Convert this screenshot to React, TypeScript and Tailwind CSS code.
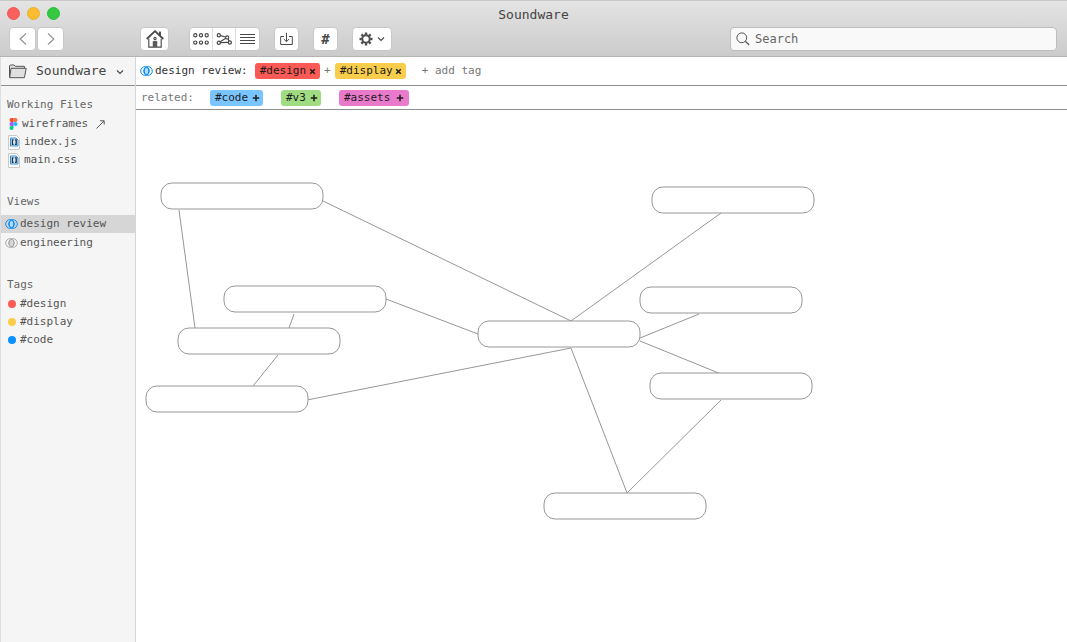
import type { ReactNode } from 'react';

type Point = [number, number];

const NODES: Point[] = [
  [25, 73],
  [88, 176],
  [42, 218],
  [10, 276],
  [516, 77],
  [504, 177],
  [342, 211],
  [514, 263],
  [408, 383],
];

const EDGES: [Point, Point][] = [
  [[187, 91], [435, 211]],
  [[43, 100], [59, 218]],
  [[250, 189], [342, 224]],
  [[158, 204], [153, 218]],
  [[142, 245], [117, 276]],
  [[171, 290], [435, 238]],
  [[585, 103], [435, 211]],
  [[563, 204], [504, 228]],
  [[504, 231], [585, 264]],
  [[585, 290], [491, 383]],
  [[435, 238], [491, 383]],
];

function HomeIcon() {
  return (
    <svg width="18" height="18" viewBox="0 0 16 16" fill="none" stroke="#4a4a4a" aria-hidden="true">
      <path d="M0.6 8 8 1l7.4 7" strokeWidth="1.6" />
      <path d="M2.5 7.8v7.4h11V7.8" strokeWidth="1" />
      <path d="M12.4 5V1.4" strokeWidth="1.8" />
      <path d="M6 15.2V10q2-1 4 0v5.2z" fill="#5a5a5a" stroke="none" />
      <circle cx="8" cy="7.5" r="1" strokeWidth="1" />
    </svg>
  );
}

function GridIcon() {
  return (
    <svg width="16" height="12" viewBox="0 0 16 12" fill="none" stroke="#4a4a4a" strokeWidth="1.2" aria-hidden="true">
      {[2.3, 9.6].map((y) => [2.3, 8, 13.7].map((x) => <circle key={`${x}-${y}`} cx={x} cy={y} r="1.6" />))}
    </svg>
  );
}

function GraphIcon() {
  return (
    <svg width="17" height="12" viewBox="0 0 17 12" fill="none" stroke="#4a4a4a" strokeWidth="1.2" aria-hidden="true">
      <circle cx="2.8" cy="2.3" r="1.6" />
      <circle cx="11.2" cy="4.4" r="1.6" />
      <circle cx="2.8" cy="9.8" r="1.6" />
      <circle cx="13.8" cy="9.5" r="1.6" />
      <path d="M4.4 2.7 9.6 4M4.1 8.8l5.7-3.5M4.4 9.6 12.2 9.3M12 5.8l1.1 2.2" />
    </svg>
  );
}

function ListIcon() {
  return (
    <svg width="15" height="12" viewBox="0 0 15 12" stroke="#4a4a4a" aria-hidden="true">
      <path d="M0 1.5h15M0 4.5h15M0 7.5h15M0 10.5h15" />
    </svg>
  );
}

function InboxIcon() {
  return (
    <svg width="13" height="14" viewBox="0 0 13 14" fill="none" stroke="#4a4a4a" aria-hidden="true">
      <path d="M4 4.5H0.7v8h11.6v-8H9M6.5 0.8v8.7M3.8 7l2.7 2.7L9.2 7" />
    </svg>
  );
}

function GearIcon() {
  return (
    <svg width="14" height="14" viewBox="0 0 14 14" fill="none" stroke="#4f4f4f" aria-hidden="true">
      <circle cx="7" cy="7" r="3.7" strokeWidth="2" />
      {[0, 45, 90, 135, 180, 225, 270, 315].map((angle) => (
        <path key={angle} d="M7 0.5v2.4" strokeWidth="2.4" transform={`rotate(${angle} 7 7)`} />
      ))}
    </svg>
  );
}

function ChevronDown() {
  return (
    <svg width="8" height="6" viewBox="0 0 8 6" fill="none" stroke="#4a4a4a" strokeWidth="1.2" aria-hidden="true">
      <path d="M1 1.5l3 3 3-3" />
    </svg>
  );
}

function FolderIcon() {
  return (
    <svg width="19" height="15" viewBox="0 0 19 15" fill="#e0e0e0" stroke="#555" strokeLinejoin="round" aria-hidden="true">
      <path d="M1.5 13.5V1.8l0.7-0.8h4l1.2 1.3h9v2.2" />
      <path d="M1.7 13.7 3 4.3h15.2L16.4 13.7z" />
    </svg>
  );
}

function RingsIcon({ stroke, fill }: { stroke: string; fill: string }) {
  return (
    <svg className="shrink-0" width="13" height="12" viewBox="0 0 13 12" fill="none" aria-hidden="true">
      <path d="M6.5 2.2a4.6 4.6 0 0 1 0 7.6a4.6 4.6 0 0 1 0-7.6" fill={fill} />
      <g stroke={stroke}>
        <circle cx="5" cy="6" r="4.3" />
        <circle cx="8" cy="6" r="4.3" />
        <ellipse cx="6.5" cy="6" rx="2.3" ry="3.8" />
      </g>
    </svg>
  );
}

function FigmaIcon() {
  return (
    <svg width="9" height="12" viewBox="0 0 8 12" aria-hidden="true">
      <path d="M4 0H2a2 2 0 0 0 0 4h2z" fill="#f24e1e" />
      <path d="M4 0h2a2 2 0 0 1 0 4H4z" fill="#ff6b55" />
      <path d="M4 4H2a2 2 0 0 0 0 4h2z" fill="#a259ff" />
      <circle cx="6" cy="6" r="2" fill="#1abcfe" />
      <path d="M4 8H2a2 2 0 1 0 2 2z" fill="#0acf83" />
    </svg>
  );
}

function CodeFileIcon() {
  return (
    <svg width="12" height="15" viewBox="0 0 12 15" fill="none" aria-hidden="true">
      <path d="M0.5 0.5h8l3 3v11h-11z" fill="#fff" stroke="#c9c9c9" />
      <path d="M2.5 3h5.5l2 2v6H2.5z" fill="#cfe6fa" stroke="#2f8fdc" />
      <path d="M5.6 4.8H4.4v4.6h1.2M6.9 4.8h1.3v4.6H6.9" stroke="#26323d" strokeWidth="1.3" />
    </svg>
  );
}

function CrossIcon() {
  return (
    <svg width="7" height="7" viewBox="0 0 7 7" stroke="#1c1c1c" strokeWidth="1.5" aria-hidden="true">
      <path d="M1.2 1.2l4.6 4.6M5.8 1.2 1.2 5.8" />
    </svg>
  );
}

function PlusIcon() {
  return (
    <svg width="8" height="8" viewBox="0 0 8 8" stroke="#1c1c1c" strokeWidth="1.5" aria-hidden="true">
      <path d="M4 0.8v6.4M0.8 4h6.4" />
    </svg>
  );
}

function ToolButton({ label, width, children }: { label: string; width: string; children: ReactNode }) {
  return (
    <button
      type="button"
      aria-label={label}
      className={`flex h-6 items-center justify-center rounded border border-[#c8c8c8] bg-white ${width}`}
    >
      {children}
    </button>
  );
}

function Header() {
  return (
    <header className="border-b border-b-[#b4b4b4] border-t border-t-[#c8c8c8] bg-linear-to-b from-[#e4e4e4] to-[#cbcbcb] pb-[5px]">
      <div className="grid h-[26px] grid-cols-[1fr_auto_1fr] items-end">
        <div className="flex gap-[7px] pb-[7px] pl-[7px]">
          <button type="button" aria-label="Close" className="size-[13px] rounded-full border border-[#ee5a52] bg-[#fc605c]" />
          <button type="button" aria-label="Minimize" className="size-[13px] rounded-full border border-[#e8b02c] bg-[#fdbc2f]" />
          <button type="button" aria-label="Zoom" className="size-[13px] rounded-full border border-[#30bb3c] bg-[#34c940]" />
        </div>
        <h1 className="pb-1 text-[13px] leading-4 text-[#444]">Soundware</h1>
      </div>
      <div className="flex items-center pl-[9px] pr-[10px]">
        <nav className="flex gap-px">
          <ToolButton label="Back" width="w-[27px]">
            <svg width="8" height="14" viewBox="0 0 8 14" fill="none" stroke="#999" strokeWidth="1.3" aria-hidden="true">
              <path d="M7 1.5 1.2 7 7 12.5" />
            </svg>
          </ToolButton>
          <ToolButton label="Forward" width="w-[27px]">
            <svg width="8" height="14" viewBox="0 0 8 14" fill="none" stroke="#999" strokeWidth="1.3" aria-hidden="true">
              <path d="M1 1.5 6.8 7 1 12.5" />
            </svg>
          </ToolButton>
        </nav>
        <div className="ml-19 flex shrink-0">
          <ToolButton label="Home" width="w-[29px]">
            <HomeIcon />
          </ToolButton>
        </div>
        <div className="ml-5 flex h-6 shrink-0 divide-x divide-[#ddd] overflow-hidden rounded border border-[#c8c8c8] bg-white">
          <button type="button" aria-label="Grid view" className="flex w-[23px] items-center justify-center"><GridIcon /></button>
          <button type="button" aria-label="Graph view" className="flex w-[23px] items-center justify-center"><GraphIcon /></button>
          <button type="button" aria-label="List view" className="flex w-[23px] items-center justify-center"><ListIcon /></button>
        </div>
        <div className="ml-[14px] flex shrink-0 gap-[14px]">
          <ToolButton label="Import" width="w-[25px]">
            <InboxIcon />
          </ToolButton>
          <ToolButton label="Tags" width="w-[25px]">
            <span className="text-sm font-bold leading-4 text-[#4a4a4a]">#</span>
          </ToolButton>
          <ToolButton label="Settings" width="w-10 gap-1">
            <GearIcon />
            <ChevronDown />
          </ToolButton>
        </div>
        <label className="ml-auto flex h-6 w-[327px] items-center gap-[5px] rounded border border-[#bdbdbd] bg-[#f9f9f9] pl-[5px]">
          <svg className="shrink-0" width="14" height="14" viewBox="0 0 14 14" fill="none" stroke="#555" aria-hidden="true">
            <circle cx="5.8" cy="5.8" r="4.9" />
            <path d="M9.3 9.3l3.9 3.7" strokeWidth="1.2" />
          </svg>
          <input
            type="text"
            aria-label="Search"
            placeholder="Search"
            className="min-w-0 flex-1 bg-transparent text-xs leading-4 text-[#444] outline-none placeholder:text-[#666]"
          />
        </label>
      </div>
    </header>
  );
}

function Item({ icon, gap, active, children }: { icon: ReactNode; gap: string; active?: boolean; children: ReactNode }) {
  return (
    <li>
      <a href="#" className={`flex h-[18px] items-center ${gap} ${active ? 'bg-[#d6d6d6]' : ''}`}>
        {icon}
        {children}
      </a>
    </li>
  );
}

function Dot({ color }: { color: string }) {
  return <span className={`size-2 rounded-full ${color}`} />;
}

function Sidebar() {
  return (
    <aside className="w-[136px] shrink-0 border-x border-r-[#d6d6d6] border-l-[#dedede] bg-[#f5f5f5] text-[11px] leading-[18px] text-[#555]">
      <button
        type="button"
        className="flex h-[29px] w-full items-center border-b border-[#8e8e8e] pl-[7px] text-[13px] leading-4 text-[#444]"
      >
        <FolderIcon />
        <span className="ml-[9px]">Soundware</span>
        <span className="ml-[10px] pt-0.5"><ChevronDown /></span>
      </button>
      <section className="pt-[10px]">
        <h2 className="pl-[6px] text-[#666]">Working Files</h2>
        <ul className="pt-px">
          <Item icon={<FigmaIcon />} gap="gap-1 pl-2">
            wireframes
            <svg className="ml-1" width="9" height="9" viewBox="0 0 9 9" fill="none" stroke="#555" aria-hidden="true">
              <path d="M0.5 8.5l7.5-7.5M4 0.8h4.2v3.7" />
            </svg>
          </Item>
          <Item icon={<CodeFileIcon />} gap="gap-1 pl-[7px]">index.js</Item>
          <Item icon={<CodeFileIcon />} gap="gap-1 pl-[7px]">main.css</Item>
        </ul>
      </section>
      <section className="pt-6">
        <h2 className="pl-[6px] text-[#666]">Views</h2>
        <ul className="flex flex-col gap-px pt-1">
          <Item icon={<RingsIcon stroke="#0a8bf5" fill="#b5dcff" />} gap="gap-[2px] pl-1" active>design review</Item>
          <Item icon={<RingsIcon stroke="#aaa" fill="#d8d8d8" />} gap="gap-[2px] pl-1">engineering</Item>
        </ul>
      </section>
      <section className="pt-6">
        <h2 className="pl-[6px] text-[#666]">Tags</h2>
        <ul className="pt-px">
          <Item icon={<Dot color="bg-[#fb5a55]" />} gap="gap-1 pl-[7px]">#design</Item>
          <Item icon={<Dot color="bg-[#f8cd4c]" />} gap="gap-1 pl-[7px]">#display</Item>
          <Item icon={<Dot color="bg-[#0a8fff]" />} gap="gap-1 pl-[7px]">#code</Item>
        </ul>
      </section>
    </aside>
  );
}

function Tag({ name, look, icon }: { name: string; look: string; icon: ReactNode }) {
  return (
    <button type="button" className={`flex h-4 items-center justify-between rounded-[3px] pl-[5px] text-[#1c1c1c] ${look}`}>
      {name}
      {icon}
    </button>
  );
}

function FilterBars() {
  return (
    <div className="text-[11px] leading-4">
      <div className="flex h-[29px] items-center border-b border-[#8e8e8e] pl-1 text-[#333]">
        <RingsIcon stroke="#0a8bf5" fill="#b5dcff" />
        <span className="ml-[2px]">design review:</span>
        <span className="ml-[7px] flex items-center">
          <Tag name="#design" look="w-[65px] bg-[#fb5a55] pr-1" icon={<CrossIcon />} />
          <span className="w-[15px] text-center text-[#777]">+</span>
          <Tag name="#display" look="w-[71px] bg-[#f8cd4c] pr-1" icon={<CrossIcon />} />
        </span>
        <button type="button" className="ml-4 text-[#777]">+ add tag</button>
      </div>
      <div className="flex h-6 items-center border-b border-[#8e8e8e] pl-[5px]">
        <span className="text-[#777]">related:</span>
        <span className="ml-4 flex items-center gap-[18px]">
          <Tag name="#code" look="w-[53px] bg-[#7ac5ff] pr-[3px]" icon={<PlusIcon />} />
          <Tag name="#v3" look="w-[40px] bg-[#a0dc82] pr-[3px]" icon={<PlusIcon />} />
          <Tag name="#assets" look="w-[70px] bg-[#e97acb] pr-[5px]" icon={<PlusIcon />} />
        </span>
      </div>
    </div>
  );
}

function Diagram() {
  return (
    <svg className="min-h-[480px] w-full flex-1" fill="none" stroke="#979797" role="img" aria-label="Tag map">
      {EDGES.map(([a, b]) => (
        <line key={`${a}-${b}`} x1={a[0]} y1={a[1]} x2={b[0]} y2={b[1]} />
      ))}
      {NODES.map(([x, y]) => (
        <rect key={`${x}-${y}`} x={x} y={y} width="162" height="26" rx="11" fill="#fff" />
      ))}
    </svg>
  );
}

export default function App() {
  return (
    <div className="flex min-h-screen flex-col bg-white font-['DejaVu_Sans_Mono','Liberation_Mono',monospace]">
      <Header />
      <div className="flex flex-1">
        <Sidebar />
        <main className="flex min-w-0 flex-1 flex-col">
          <FilterBars />
          <Diagram />
        </main>
      </div>
    </div>
  );
}
